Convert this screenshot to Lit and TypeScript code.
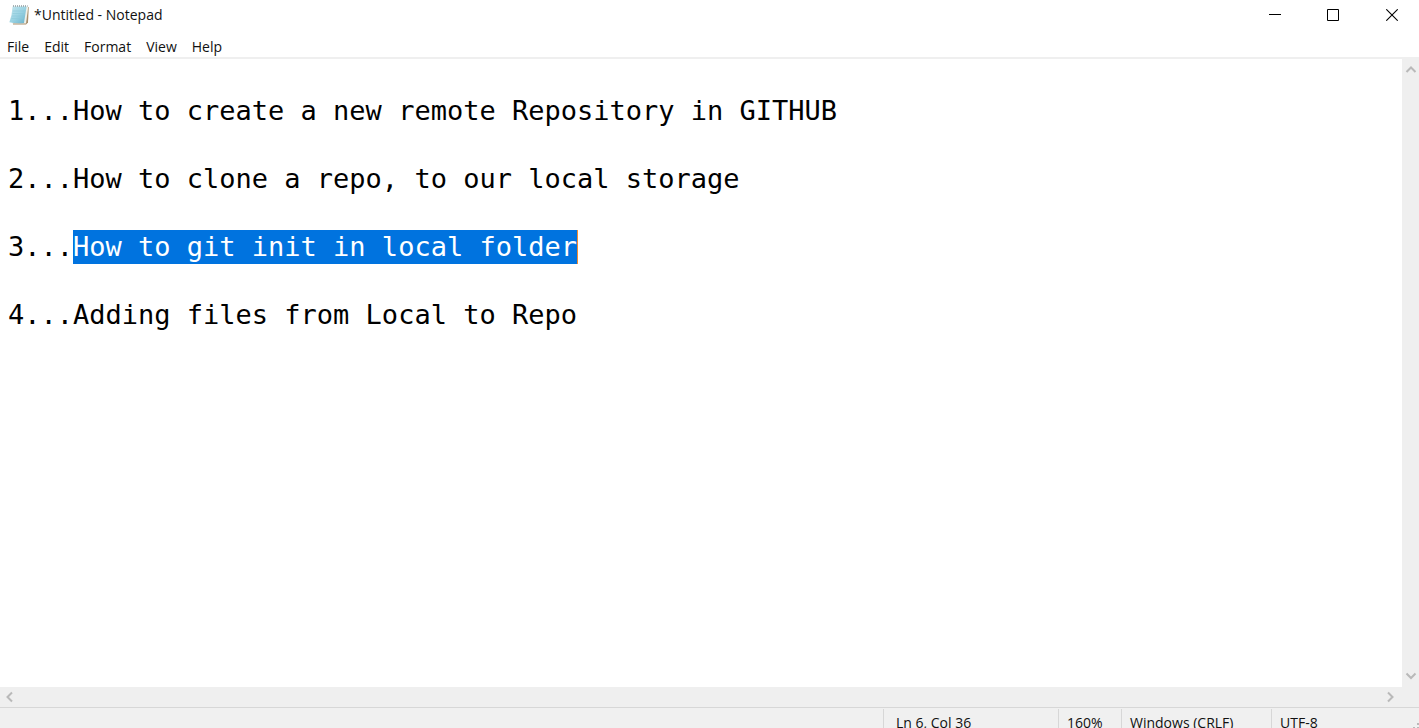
import { LitElement, html, css } from "lit";
import { customElement, query, state } from "lit/decorators.js";

const DOCUMENT_TEXT = [
  "",
  "1...How to create a new remote Repository in GITHUB",
  "",
  "2...How to clone a repo, to our local storage",
  "",
  "3...How to git init in local folder",
  "",
  "4...Adding files from Local to Repo",
].join("\n");

const SELECTED = "How to git init in local folder";
const MENUS = ["File", "Edit", "Format", "View", "Help"];

@customElement("note-editor")
class NoteEditor extends LitElement {
  static styles = css`
    :host {
      display: block;
      position: relative;
      min-width: 0;
      min-height: 0;
      overflow: hidden;
      background: #fff;
      font: 27px/34px "DejaVu Sans Mono", monospace;
    }
    .text {
      display: block;
      box-sizing: border-box;
      width: 100%;
      height: 100%;
      margin: 0;
      padding: 1px 8px 0;
      border: 0;
      outline: 0;
      resize: none;
      overflow: hidden;
      white-space: pre;
      background: transparent;
      color: #000;
      font: inherit;
    }
    .text::selection {
      background: #0073df;
      color: #fff;
    }
    .caret {
      position: absolute;
      top: calc(1px + 5 * 34px);
      left: calc(8px + 35ch);
      width: 1px;
      height: 34px;
      background: #f08c32;
    }
  `;

  @query(".text") private area!: HTMLTextAreaElement;

  firstUpdated() {
    const start = DOCUMENT_TEXT.indexOf(SELECTED);
    this.area.focus();
    this.area.setSelectionRange(start, start + SELECTED.length);
  }

  render() {
    return html`
      <textarea class="text" aria-label="Text editor" spellcheck="false" wrap="off" .value=${DOCUMENT_TEXT}></textarea>
      <span class="caret"></span>
    `;
  }
}

@customElement("app-root")
class AppRoot extends LitElement {
  static styles = css`
    :host {
      display: flex;
      flex-direction: column;
      height: 100vh;
      overflow: hidden;
      background: #fff;
      color: #111;
      font: 14px/20px "Open Sans", sans-serif;
    }
    button {
      display: grid;
      place-items: center;
      margin: 0;
      padding: 0;
      border: 0;
      background: transparent;
      color: inherit;
      font: inherit;
    }
    svg {
      display: block;
    }
    .titlebar {
      display: flex;
      align-items: center;
      height: 30px;
      padding-left: 8px;
    }
    .title {
      flex: 1;
      margin: 0 0 0 4px;
      font: inherit;
    }
    .control {
      width: 58px;
      height: 30px;
    }
    .close {
      width: 54px;
      margin-left: 3px;
    }
    .menubar {
      display: flex;
      gap: 15px;
      height: 20px;
      padding: 7px 7px 0;
      align-items: center;
      border-bottom: 2px solid #efefef;
    }
    .workspace {
      flex: 1;
      min-height: 0;
      display: grid;
      grid-template-columns: 1fr 17px;
      grid-template-rows: 1fr 20px;
    }
    .scroll {
      display: flex;
      justify-content: space-between;
      background: #efefef;
      color: #b9b9b9;
    }
    .vertical {
      flex-direction: column;
    }
    .vertical button {
      width: 18px;
      height: 22px;
    }
    .horizontal {
      padding-right: 2px;
    }
    .horizontal button {
      width: 20px;
      height: 20px;
    }
    .corner {
      background: #efefef;
    }
    .status {
      display: flex;
      justify-content: flex-end;
      height: 20px;
      overflow: hidden;
      border-top: 1px solid #d7d7d7;
      background: #f0f0f0;
    }
    .cell {
      box-sizing: border-box;
      padding: 4px 0 0 8px;
      margin-top: 1px;
      border-left: 1px solid #d7d7d7;
      white-space: nowrap;
    }
    .position {
      width: 175px;
      padding-left: 12px;
    }
    .zoom {
      width: 63px;
    }
    .ending {
      width: 150px;
    }
    .encoding {
      display: flex;
      justify-content: space-between;
      width: 148px;
    }
  `;

  @state() private name = "*Untitled - Notepad";

  private chevron(label: string, path: string) {
    return html`<button aria-label=${label}>
      <svg width="12" height="12" viewBox="0 0 12 12" fill="none" stroke="currentColor" stroke-width="2">
        <path d=${path}></path>
      </svg>
    </button>`;
  }

  render() {
    return html`
      <header class="titlebar">
        <svg width="22" height="22" viewBox="0 0 22 22" aria-hidden="true">
          <defs>
            <linearGradient id="paper" x1="0" y1="0" x2="1" y2="1">
              <stop offset="0" stop-color="#c5e6ee"></stop>
              <stop offset=".5" stop-color="#9bd3e3"></stop>
              <stop offset="1" stop-color="#68b1ca"></stop>
            </linearGradient>
          </defs>
          <path d="M6 3H20.8L20 18.6L18 20.6H5z" fill="#a98f6c"></path>
          <path d="M6 2.6H20.3L18 19.6H4z" fill="#eef0e9"></path>
          <path d="M4.6 2.4H18.6L16 19Q8 20 1.4 18.2Q4 11.6 4.6 2.4z" fill="url(#paper)"></path>
          <path d="M5 7H16.5M4.6 9.5H16M4 12H15.6M3.5 14.5H15" stroke="#8cc8d8" stroke-width=".6"></path>
          <path d="M5 2H19.6" stroke="#8d9a9e" stroke-width="1.6" stroke-dasharray="1 1"></path>
        </svg>
        <h1 class="title">${this.name}</h1>
        <button class="control" aria-label="Minimize">
          <svg width="12" height="12" viewBox="0 0 12 12"><path d="M0 5.5H12" stroke="#000"></path></svg>
        </button>
        <button class="control" aria-label="Maximize">
          <svg width="12" height="12" viewBox="0 0 12 12"><path d="M.5 .5H11.5V11.5H.5z" fill="none" stroke="#000"></path></svg>
        </button>
        <button class="control close" aria-label="Close">
          <svg width="12" height="12" viewBox="0 0 12 12"><path d="M.3 .3L11.7 11.7M11.7 .3L.3 11.7" stroke="#000" stroke-width="1.1"></path></svg>
        </button>
      </header>
      <nav class="menubar">${MENUS.map((m) => html`<button>${m}</button>`)}</nav>
      <main class="workspace">
        <note-editor></note-editor>
        <div class="scroll vertical">
          ${this.chevron("Scroll up", "M1.5 8L6 3.5L10.5 8")}
          ${this.chevron("Scroll down", "M1.5 3.5L6 8L10.5 3.5")}
        </div>
        <div class="scroll horizontal">
          ${this.chevron("Scroll left", "M8 1.5L3.5 6L8 10.5")}
          ${this.chevron("Scroll right", "M4 1.5L8.5 6L4 10.5")}
        </div>
        <div class="corner"></div>
      </main>
      <footer class="status">
        <span class="cell position">Ln 6, Col 36</span>
        <span class="cell zoom">160%</span>
        <span class="cell ending">Windows (CRLF)</span>
        <span class="cell encoding">UTF-8
          <svg width="6" height="16" viewBox="0 0 6 16" fill="#b9b9b9" aria-hidden="true">
            <path d="M4 10h2v2H4zM0 14h2v2H0zM4 14h2v2H4z"></path>
          </svg>
        </span>
      </footer>
    `;
  }
}
